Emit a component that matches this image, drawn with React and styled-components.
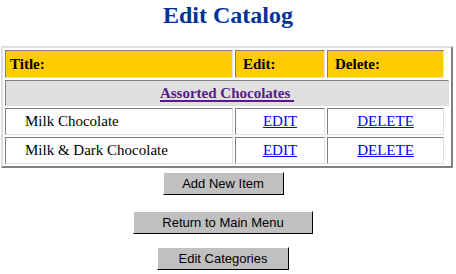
import React from 'react'
import styled, { createGlobalStyle } from 'styled-components'

const GlobalStyle = createGlobalStyle`
    body {
        margin: 0;
        background: #ffffff;
        font-family: "Liberation Serif", "Times New Roman", serif;
    }
`

const items = [
    { title: 'Milk Chocolate' },
    { title: 'Milk & Dark Chocolate' },
]

export default function App() {
    return (
        <Page>
            <GlobalStyle />
            <Title>Edit Catalog</Title>

            <Catalog>
                <colgroup>
                    <col style={{ width: 228 }} />
                    <col style={{ width: 90 }} />
                    <col style={{ width: 117 }} />
                    <col style={{ width: 3 }} />
                </colgroup>
                <tbody>
                    <HeadRow>
                        <HeadCell indent={4}>Title:</HeadCell>
                        <HeadCell indent={7}>Edit:</HeadCell>
                        <HeadCell indent={7}>Delete:</HeadCell>
                    </HeadRow>
                    <CategoryRow>
                        <CategoryCell colSpan={4}>
                            <CategoryLink href="#">Assorted Chocolates&nbsp;</CategoryLink>
                        </CategoryCell>
                    </CategoryRow>
                    {items.map((item, i) => (
                        <ItemRow key={item.title} tall={i === 0}>
                            <ItemCell>{item.title}</ItemCell>
                            <ItemCell center><ActionLink href="#">EDIT</ActionLink></ItemCell>
                            <ItemCell center><ActionLink href="#">DELETE</ActionLink></ItemCell>
                        </ItemRow>
                    ))}
                </tbody>
            </Catalog>

            <Buttons>
                <Button width={121} gap={4}>Add New Item</Button>
                <Button width={180} gap={16}>Return to Main Menu</Button>
                <Button width={132} gap={13}>Edit Categories</Button>
            </Buttons>
        </Page>
    )
}

const Page = styled.div`
    width: 456px;
    height: 274px;
    overflow: hidden;
`
const Title = styled.h1`
    margin: 0;
    padding-top: 2px;
    font-size: 24px;
    line-height: 27px;
    font-weight: bold;
    color: #003399;
    text-align: center;
`
const Catalog = styled.table`
    width: 452px;
    margin: 17px 0 0 1px;
    table-layout: fixed;
    border-collapse: separate;
    border-spacing: 2px;
    border: 2px solid;
    border-color: #dfdfdf #808080 #808080 #dfdfdf;
    font-size: 15px;
`
const Cell = styled.td`
    border: 1px solid;
    border-color: #808080 #dfdfdf #dfdfdf #808080;
    padding: 0;
    white-space: nowrap;
`
const HeadRow = styled.tr`
    height: 28px;
`
const HeadCell = styled(Cell)`
    background: #ffcc00;
    color: #000000;
    font-weight: bold;
    padding-left: ${props => props.indent}px;
    padding-top: 1px;
`
const CategoryRow = styled.tr`
    height: 26px;
`
const CategoryCell = styled(Cell)`
    background: #e0e0e0;
    text-align: center;
    padding-top: 1px;
`
const CategoryLink = styled.a`
    color: #551a8b;
    font-weight: bold;
    text-decoration: underline;
    text-decoration-thickness: 2px;
    text-underline-offset: 2px;
`
const ItemRow = styled.tr`
    height: 27px;
`
const ItemCell = styled(Cell)`
    background: #ffffff;
    color: #000000;
    text-align: ${props => props.center ? 'center' : 'left'};
    padding-left: ${props => props.center ? 0 : 19}px;
`
const ActionLink = styled.a`
    color: #0000ff;
    text-decoration: underline;
`
const Buttons = styled.div`
    display: flex;
    flex-direction: column;
    align-items: center;
    padding-right: 10px;
`
const Button = styled.button`
    width: ${props => props.width}px;
    height: 23px;
    margin-top: ${props => props.gap}px;
    padding: 0;
    background: #c0c0c0;
    border: 1px solid;
    border-color: #ffffff #000000 #000000 #ffffff;
    border-radius: 0;
    color: #000000;
    font-family: "Liberation Sans", Arial, sans-serif;
    font-size: 13px;
    cursor: pointer;
`
